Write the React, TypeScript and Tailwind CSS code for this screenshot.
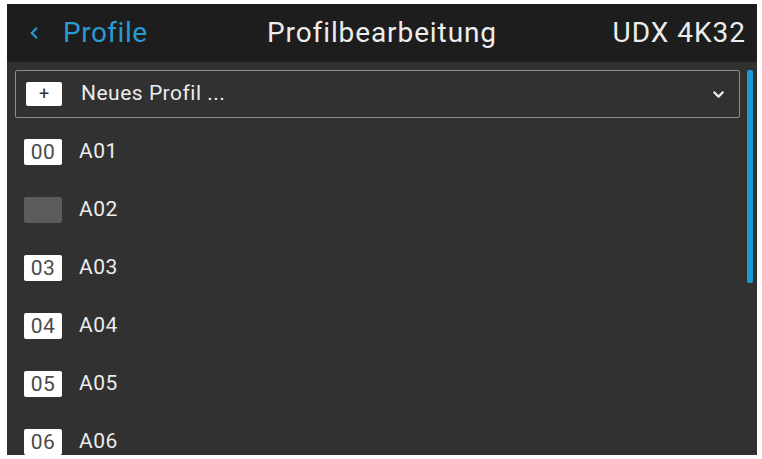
import { ChevronDown, ChevronLeft } from 'lucide-react';

// Profile row data
interface ProfileRow {
  code: string | null;
  name: string;
}

const rows: ProfileRow[] = [
  { code: '00', name: 'A01' },
  { code: null, name: 'A02' },
  { code: '03', name: 'A03' },
  { code: '04', name: 'A04' },
  { code: '05', name: 'A05' },
  { code: '06', name: 'A06' },
];

const App = () => {
  return (
    <div
      className="w-[762px] h-[459px] bg-white pl-[7px] pt-[4px] overflow-hidden"
      style={{ fontFamily: 'Roboto, "Liberation Sans", sans-serif' }}
    >
      <div className="w-[750px] h-[451px] bg-[#313131] flex flex-col overflow-hidden">
        {/* Header */}
        <div className="h-[58px] shrink-0 bg-[#1d1d1d] flex items-center px-[18px] relative">
          <div className="flex items-center text-[#2a9ad3]">
            <ChevronLeft className="w-[18px] h-[18px] mr-[20px]" strokeWidth={3} />
            <span className="text-[28px] leading-none tracking-[0.5px]">Profile</span>
          </div>
          <div className="absolute left-0 right-0 text-center text-[28px] text-[#ececec] leading-none tracking-[0.9px] pointer-events-none">
            Profilbearbeitung
          </div>
          <div className="ml-auto text-[28px] text-[#ececec] leading-none tracking-[1px] mr-[-7px]">UDX 4K32</div>
        </div>

        {/* Body */}
        <div className="flex flex-1 relative pt-[8px]">
          <div className="flex-1 pl-[8px] pr-[17px]">
            <div className="h-[48px] border border-[#8c8c8c] rounded-[2px] flex items-center pl-[10px] pr-[12px]">
              <div className="w-[36px] h-[24px] bg-white rounded-[2px] flex items-center justify-center text-[#333] text-[18px] leading-none">
                +
              </div>
              <span className="ml-[19px] text-[21px] text-[#ececec] tracking-[0.5px]">Neues Profil ...</span>
              <ChevronDown className="ml-auto w-[17px] h-[17px] text-[#ececec]" strokeWidth={3} />
            </div>

            <div className="mt-[5px] flex flex-col">
              {rows.map(row => (
                <div key={row.name} className="h-[58px] flex items-center pl-[9px]">
                  {row.code ? (
                    <div className="w-[38px] h-[26px] bg-white rounded-[2px] flex items-center justify-center text-[#4a4a4a] text-[21px] leading-none tracking-[0.5px]">
                      {row.code}
                    </div>
                  ) : (
                    <div className="w-[38px] h-[26px] bg-[#5b5b5b] rounded-[2px]" />
                  )}
                  <span className="ml-[17px] text-[21px] text-[#ececec] tracking-[0.5px]">{row.name}</span>
                </div>
              ))}
            </div>
          </div>

          {/* Scrollbar */}
          <div className="absolute right-[4px] top-[8px] w-[6px] h-[213px] bg-[#1c9ad8] rounded-[2px]" />
        </div>
      </div>
    </div>
  );
};

export default App;
